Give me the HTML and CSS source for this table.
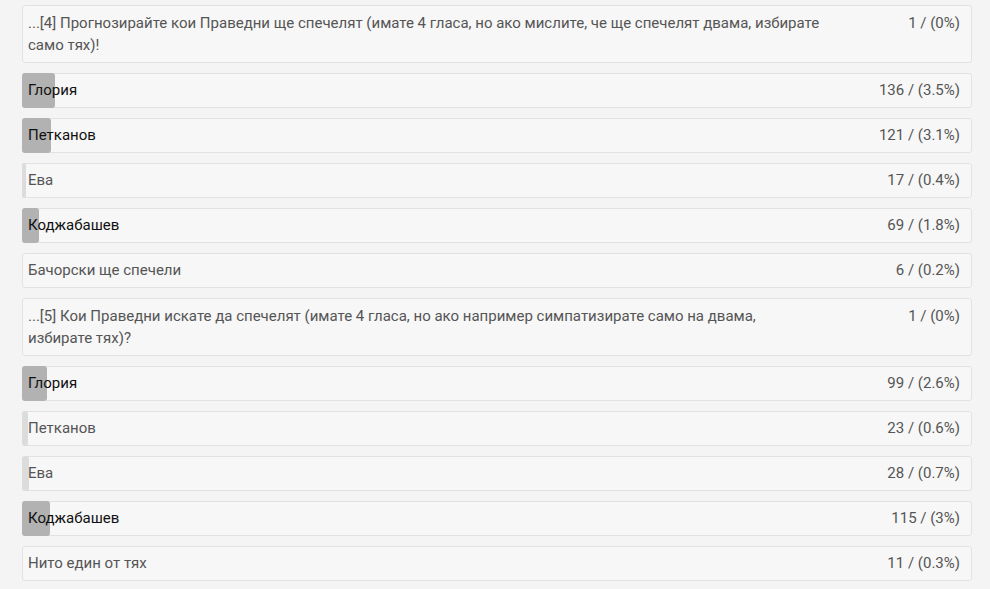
FILE: index.html
```html
<!DOCTYPE html>
<html lang="bg">
<head>
    <meta charset="UTF-8">
    <title>Резултати</title>
    <link rel="stylesheet" href="styles.css">
</head>
<body>
    <div class="results">
        <!-- въпрос 4 -->
        <div class="row question">
            <span class="label">...[4] Прогнозирайте кои Праведни ще спечелят (имате 4 гласа, но ако мислите, че ще спечелят двама, избирате само тях)!</span>
            <span class="count">1 / (0%)</span>
        </div>
        <div class="row strong">
            <div class="bar" style="width: 3.5%"></div>
            <span class="label">Глория</span>
            <span class="count">136 / (3.5%)</span>
        </div>
        <div class="row strong">
            <div class="bar" style="width: 3.1%"></div>
            <span class="label">Петканов</span>
            <span class="count">121 / (3.1%)</span>
        </div>
        <div class="row">
            <div class="bar" style="width: 0.4%"></div>
            <span class="label">Ева</span>
            <span class="count">17 / (0.4%)</span>
        </div>
        <div class="row strong">
            <div class="bar" style="width: 1.8%"></div>
            <span class="label">Коджабашев</span>
            <span class="count">69 / (1.8%)</span>
        </div>
        <div class="row">
            <span class="label">Бачорски ще спечели</span>
            <span class="count">6 / (0.2%)</span>
        </div>

        <!-- въпрос 5 -->
        <div class="row question">
            <span class="label">...[5] Кои Праведни искате да спечелят (имате 4 гласа, но ако например симпатизирате само на двама, избирате тях)?</span>
            <span class="count">1 / (0%)</span>
        </div>
        <div class="row strong">
            <div class="bar" style="width: 2.6%"></div>
            <span class="label">Глория</span>
            <span class="count">99 / (2.6%)</span>
        </div>
        <div class="row">
            <div class="bar" style="width: 0.6%"></div>
            <span class="label">Петканов</span>
            <span class="count">23 / (0.6%)</span>
        </div>
        <div class="row">
            <div class="bar" style="width: 0.7%"></div>
            <span class="label">Ева</span>
            <span class="count">28 / (0.7%)</span>
        </div>
        <div class="row strong">
            <div class="bar" style="width: 3%"></div>
            <span class="label">Коджабашев</span>
            <span class="count">115 / (3%)</span>
        </div>
        <div class="row">
            <span class="label">Нито един от тях</span>
            <span class="count">11 / (0.3%)</span>
        </div>
    </div>
</body>
</html>
```

FILE: styles.css
```css
body {
    margin: 0;
    padding: 5px 18px 0 22px;
    background-color: #f4f4f4;
    font-family: Roboto, "Liberation Sans", Arial, sans-serif;
    font-size: 15px;
    color: #555;
}

.results {
    display: flex;
    flex-direction: column;
    gap: 10px;
}

.row {
    position: relative;
    display: flex;
    justify-content: space-between;
    align-items: flex-start;
    gap: 30px;
    min-height: 33px;
    padding: 0 11px 0 5px;
    line-height: 33px;
    background-color: #f7f7f7;
    border: 1px solid #e2e2e2;
    border-radius: 3px;
    box-sizing: border-box;
}

.row .label,
.row .count {
    position: relative;
}

.row .count {
    white-space: nowrap;
}

.question {
    padding-top: 6px;
    padding-bottom: 6px;
    line-height: 22px;
    min-height: 57px;
}

.question .label {
    max-width: 795px;
}

.bar {
    position: absolute;
    left: -1px;
    top: -1px;
    bottom: -1px;
    min-width: 3px;
    background-color: #dcdcdc;
    border-radius: 3px;
}

.strong .bar {
    background-color: #b2b2b2;
}

.strong .label {
    color: #111;
}
```
